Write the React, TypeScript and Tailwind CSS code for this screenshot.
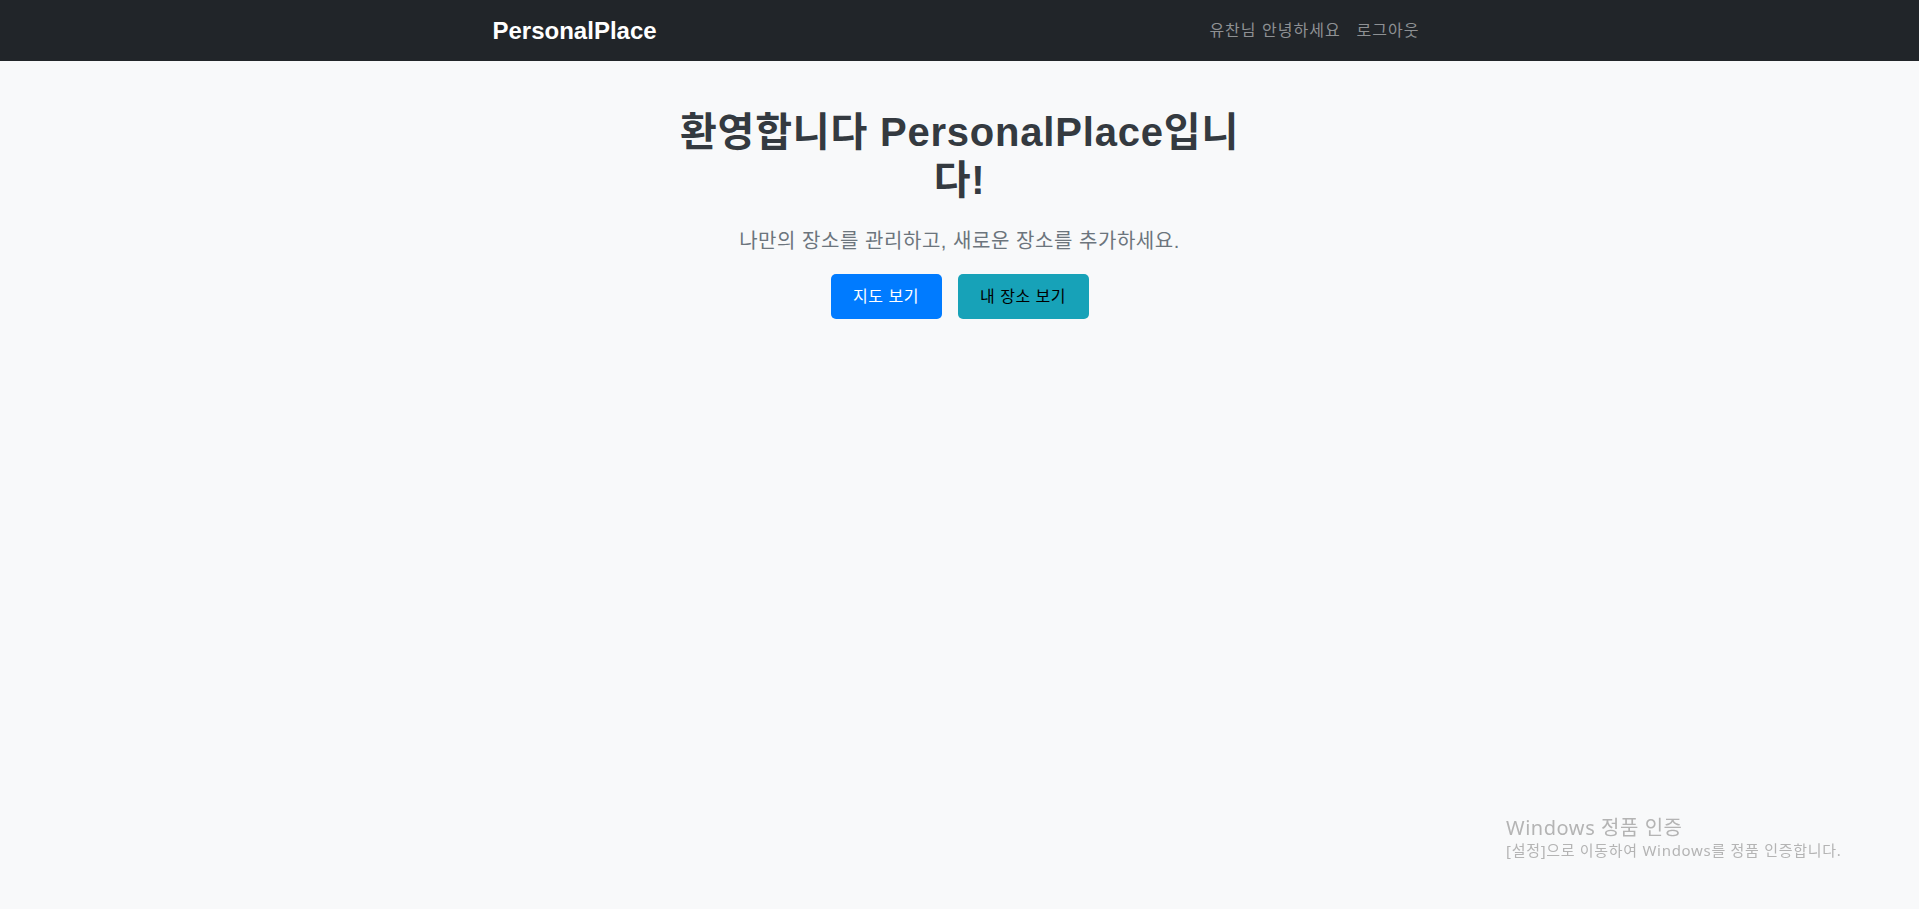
import React from "react";

export default function App() {
  return (
    <div className="min-h-[909px] bg-[#f8f9fa] font-['Liberation_Sans','Noto_Sans_CJK_KR',sans-serif]">
      <nav className="h-[61px] bg-[#212529]">
        <div className="mx-auto flex h-full w-[960px] items-center justify-between pl-[13px] pr-[15px]">
          <a className="text-[24px] font-bold leading-none text-white">PersonalPlace</a>
          <div className="flex items-center text-[16px] tracking-[1px] text-[#8e9194]">
            <span className="px-2">유찬님 안녕하세요</span>
            <a className="pl-2 pr-[5px]">로그아웃</a>
          </div>
        </div>
      </nav>

      <main className="mx-auto flex w-[960px] flex-col items-center px-[15px] pt-[47px]">
        <h1 className="mx-auto max-w-[570px] text-center text-[40px] font-bold leading-[48px] tracking-[0.8px] text-[#343a40]">
          환영합니다 PersonalPlace입니다!
        </h1>
        <p className="mt-[22px] text-center text-[20px] leading-[30px] tracking-[0.55px] text-[#6c757d]">
          나만의 장소를 관리하고, 새로운 장소를 추가하세요.
        </p>
        <div className="mt-[18px] flex gap-4">
          <button className="h-[45px] w-[111px] rounded-[5px] bg-[#007bff] text-[16px] tracking-[0.5px] text-white">
            지도 보기
          </button>
          <button className="h-[45px] w-[131px] rounded-[5px] bg-[#17a2b8] text-[16px] tracking-[0.5px] text-black">
            내 장소 보기
          </button>
        </div>
      </main>

      <div className="fixed left-[1506px] top-[816px] text-[#b4b4b4] font-['Noto_Sans','Noto_Sans_CJK_KR',sans-serif]">
        <div className="text-[20px] leading-[23px] tracking-[0.55px]">Windows 정품 인증</div>
        <div className="text-[15px] leading-[22px] tracking-[0.7px]">[설정]으로 이동하여 Windows를 정품 인증합니다.</div>
      </div>
    </div>
  );
}
